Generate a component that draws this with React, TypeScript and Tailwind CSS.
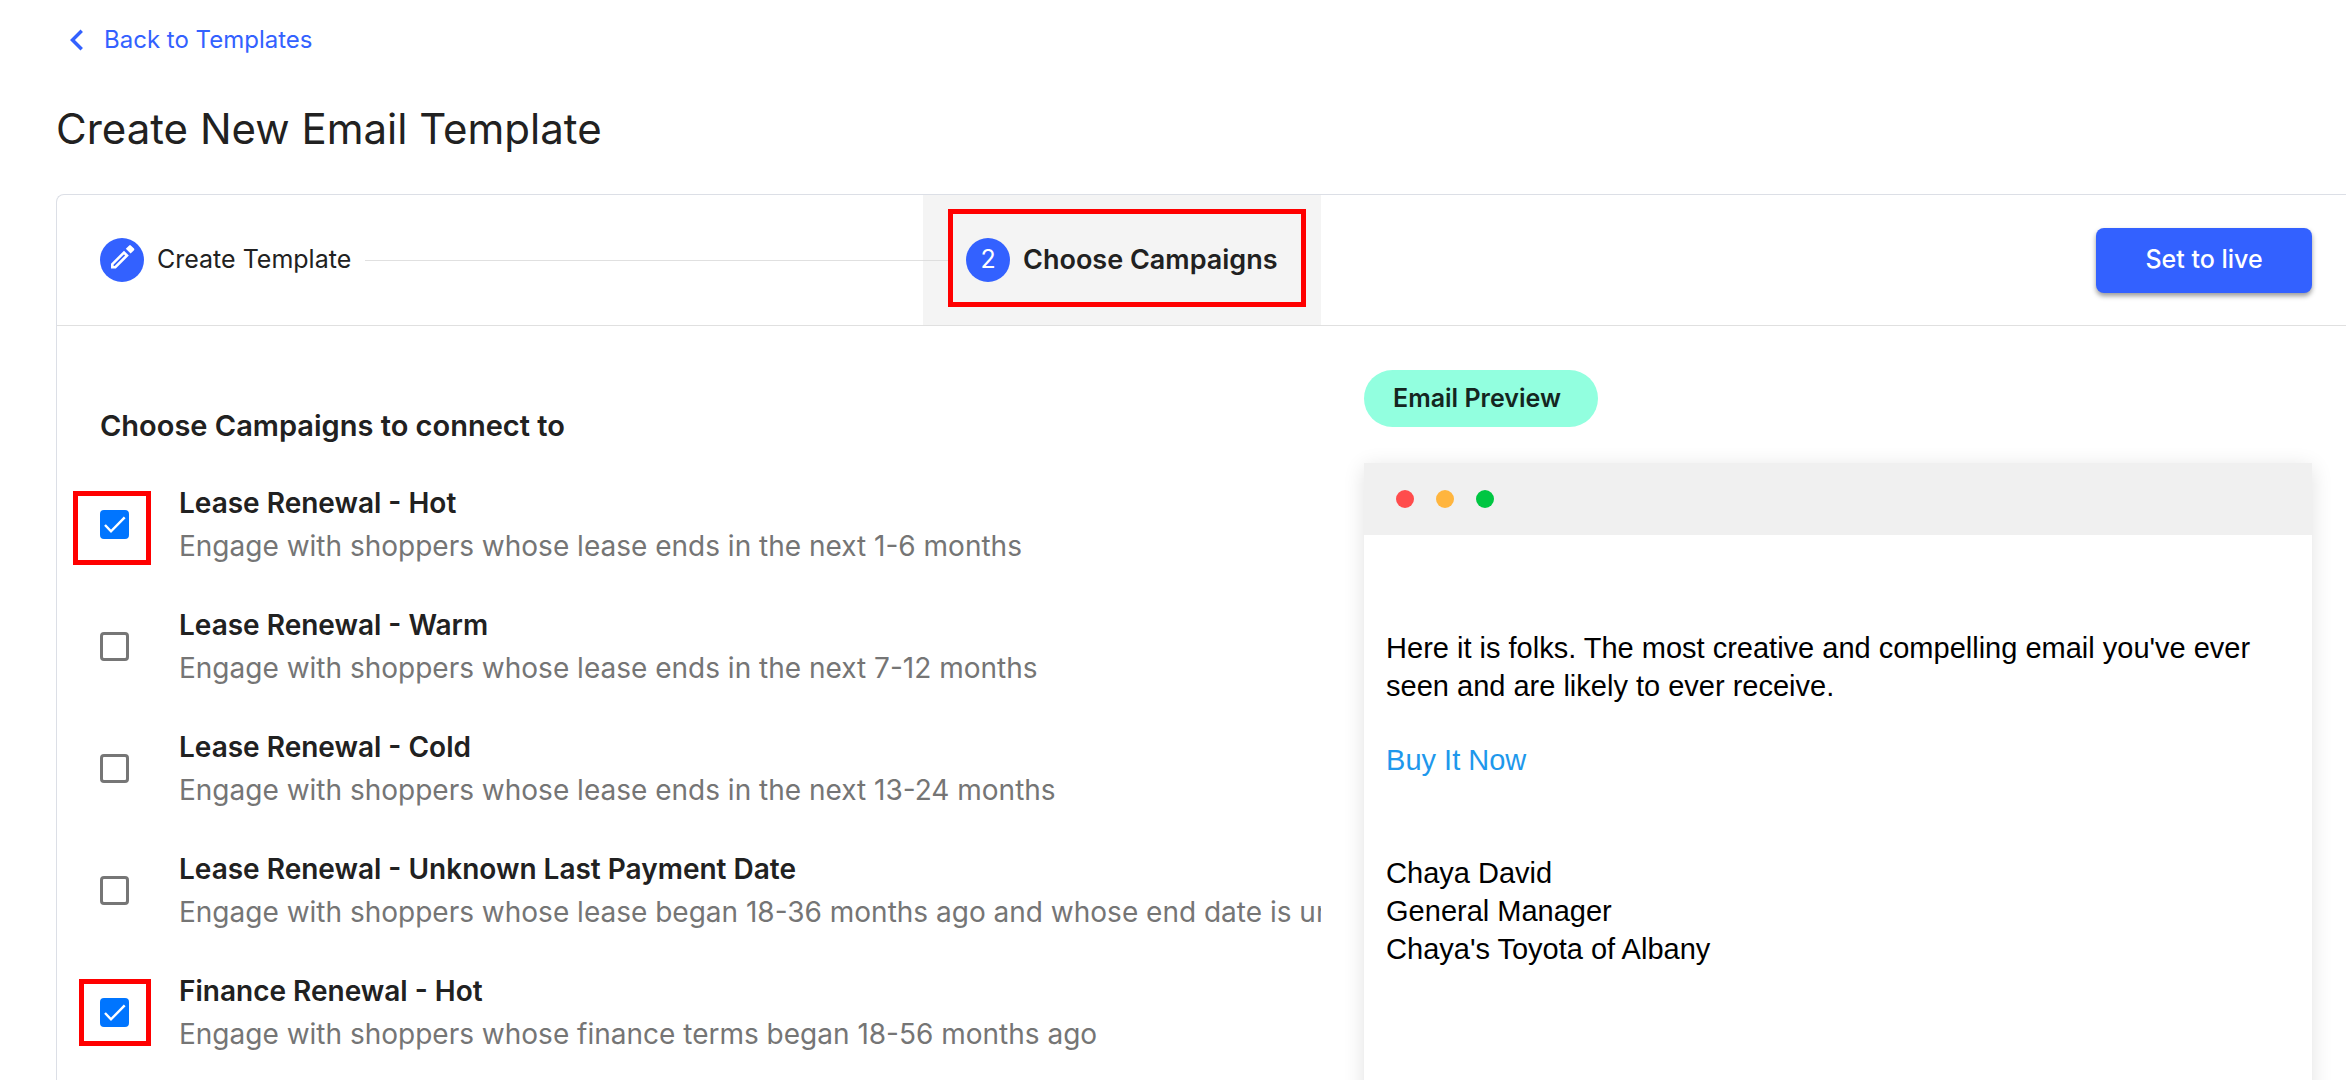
import React, { useState } from 'react';
import { MdChevronLeft } from 'react-icons/md';

interface Campaign {
  id: string;
  name: string;
  description: string;
  highlight?: string;
}

const campaigns: Campaign[] = [
  {
    id: 'lease-hot',
    name: 'Lease Renewal - Hot',
    description: 'Engage with shoppers whose lease ends in the next 1-6 months',
    highlight: 'absolute -left-[27px] -right-[22px] -top-[19px] -bottom-[26px] border-[5px] border-[#ff0000] pointer-events-none',
  },
  {
    id: 'lease-warm',
    name: 'Lease Renewal - Warm',
    description: 'Engage with shoppers whose lease ends in the next 7-12 months',
  },
  {
    id: 'lease-cold',
    name: 'Lease Renewal - Cold',
    description: 'Engage with shoppers whose lease ends in the next 13-24 months',
  },
  {
    id: 'lease-unknown',
    name: 'Lease Renewal - Unknown Last Payment Date',
    description: 'Engage with shoppers whose lease began 18-36 months ago and whose end date is unknown',
  },
  {
    id: 'finance-hot',
    name: 'Finance Renewal - Hot',
    description: 'Engage with shoppers whose finance terms began 18-56 months ago',
    highlight: 'absolute -left-[21px] -right-[22px] -top-[19px] -bottom-[19px] border-[5px] border-[#ff0000] pointer-events-none',
  },
];

const PencilIcon: React.FC = () => (
  <svg className="h-11 w-11" viewBox="0 0 44 44" fill="none">
    <path d="M12.300 29.200V26.200L24 14.500L27 17.500L15.300 29.200Z" stroke="white" strokeWidth="2.600" />
    <path d="M25.800 10.800L29.200 7.400Q30 6.600 30.800 7.400L34 10.600Q34.800 11.400 34 12.200L30.600 15.600Z" fill="white" />
  </svg>
);

const CampaignRow: React.FC<{ campaign: Campaign; checked: boolean; onToggle: () => void }> = ({
  campaign,
  checked,
  onToggle,
}) => (
  <li className="flex h-[122px] items-start">
    <div className="relative mt-7 h-[29px] w-[29px] shrink-0">
      <input
        id={campaign.id}
        type="checkbox"
        checked={checked}
        onChange={onToggle}
        className="block h-full w-full appearance-none rounded-[4px] border-[3px] border-[#767676] bg-white checked:border-[#0075ff] checked:bg-[#0075ff]"
      />
      {checked && (
        <svg className="pointer-events-none absolute inset-0" viewBox="0 0 29 29" fill="none" stroke="white" strokeWidth="2.4">
          <path d="M5 15l6 6.300L24.700 7.300" />
        </svg>
      )}
      {campaign.highlight && <span className={campaign.highlight} />}
    </div>
    <label htmlFor={campaign.id} className="ml-[50px] min-w-0 flex-1 overflow-hidden whitespace-nowrap">
      <span className="block text-[28px] leading-[43px] font-semibold text-[#212121]">{campaign.name}</span>
      <span className="block overflow-hidden text-[28px] leading-[43px] text-[#757575]">{campaign.description}</span>
    </label>
  </li>
);

const EmailPreview: React.FC = () => (
  <div className="mt-9 min-h-[800px] bg-white shadow-[0_4px_20px_rgba(0,0,0,0.12)]">
    <div className="flex h-[72px] items-center gap-[22px] bg-[#f0f0f0] pl-8">
      <span className="h-[18px] w-[18px] rounded-full bg-[#ff4c4c]" />
      <span className="h-[18px] w-[18px] rounded-full bg-[#ffb53e]" />
      <span className="h-[18px] w-[18px] rounded-full bg-[#00c642]" />
    </div>
    <div className="px-[22px] pt-[94px] font-['Liberation_Sans',Arial,sans-serif] text-[29px] leading-[38px] text-black">
      <p>Here it is folks. The most creative and compelling email you've ever seen and are likely to ever receive.</p>
      <p className="mt-9">
        <a href="#buy" className="text-[#1e98ec]">Buy It Now</a>
      </p>
      <p className="mt-[75px]">
        Chaya David
        <br />
        General Manager
        <br />
        Chaya's Toyota of Albany
      </p>
    </div>
  </div>
);

const App: React.FC = () => {
  const [selected, setSelected] = useState<string[]>(['lease-hot', 'finance-hot']);

  const toggle = (id: string) => {
    setSelected((prev) => (prev.includes(id) ? prev.filter((item) => item !== id) : [...prev, id]));
  };

  return (
    <div className="flex h-screen flex-col overflow-hidden bg-white pl-14 font-[Inter,sans-serif] text-[#212121]">
      <a href="#templates" className="mt-[19px] flex h-[42px] items-center self-start text-[24px] text-[#3361ff]">
        <MdChevronLeft className="h-[42px] w-[42px]" />
        <span className="ml-[6px]">Back to Templates</span>
      </a>
      <h1 className="mt-10 text-[42px] leading-[56px]">Create New Email Template</h1>

      <main className="mt-[37px] min-h-[1100px] rounded-tl-lg border-t border-l border-[#dcdfe6]">
        <div className="grid h-[131px] grid-cols-[37fr_30fr] border-b border-[#e0e0e0]">
          <nav className="flex min-w-0 items-center pl-[43px]">
            <a href="#create" className="flex shrink-0 items-center gap-[13px] text-[25px]">
              <span className="h-11 w-11 rounded-full bg-[#3361ff]">
                <PencilIcon />
              </span>
              Create Template
            </a>
            <span className="ml-[14px] h-px flex-1 bg-[#e0e0e0]" />
            <a
              href="#campaigns"
              aria-current="step"
              className="relative flex h-full w-[398px] shrink-0 items-center bg-[#f4f4f4] text-[27px] font-semibold"
            >
              <span className="h-px w-[25px] bg-[#dedede]" />
              <span className="ml-[18px] flex h-11 w-11 items-center justify-center rounded-full bg-[#3361ff] text-[25px] font-normal text-white">
                2
              </span>
              <span className="ml-[13px] whitespace-nowrap">Choose Campaigns</span>
              <span className="pointer-events-none absolute top-[14px] right-[15px] bottom-[18px] left-[25px] border-[5px] border-[#ff0000]" />
            </a>
          </nav>
          <div className="flex items-center justify-end pr-[34px]">
            <button
              type="button"
              className="h-[65px] w-[216px] rounded-lg bg-[#3361ff] text-[25px] font-medium text-white shadow-[0_3px_5px_rgba(0,0,0,0.4)]"
            >
              Set to live
            </button>
          </div>
        </div>

        <div className="grid grid-cols-[37fr_30fr]">
          <section className="min-w-0 pl-[43px]">
            <h2 className="mt-[80px] text-[29px] leading-[40px] font-semibold">Choose Campaigns to connect to</h2>
            <ul className="mt-9">
              {campaigns.map((campaign) => (
                <CampaignRow
                  key={campaign.id}
                  campaign={campaign}
                  checked={selected.includes(campaign.id)}
                  onToggle={() => toggle(campaign.id)}
                />
              ))}
            </ul>
          </section>
          <section className="min-w-0 pt-11 pr-[34px] pl-[43px]">
            <h2 className="flex h-[57px] w-[234px] items-center rounded-full bg-[#92ffdf] pl-[29px] text-[25px] font-semibold text-[#14261f]">
              Email Preview
            </h2>
            <EmailPreview />
          </section>
        </div>
      </main>
    </div>
  );
};

export default App;
